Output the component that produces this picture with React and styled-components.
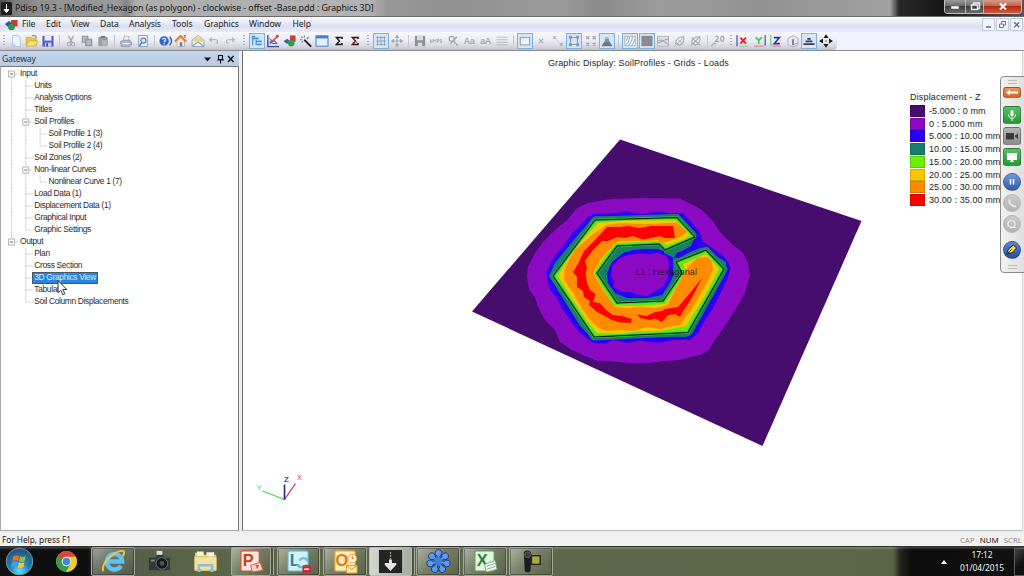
import React from "react";
import styled, { createGlobalStyle, css } from "styled-components";

const ui = `"Noto Sans", "Open Sans", sans-serif`;
const arial = `"Liberation Sans", Arial, sans-serif`;

const Global = createGlobalStyle`
  * { box-sizing: border-box; }
  body { margin: 0; overflow: hidden; background: #fff; }
`;

const Desktop = styled.div`
  position: relative;
  width: 1024px;
  height: 576px;
  display: flex;
  flex-direction: column;
  overflow: hidden;
  font-family: ${ui};
  color: #222;
  white-space: nowrap;
`;

/* ---------- title bar ---------- */
const TitleBar = styled.header`
  height: 17px;
  flex: none;
  display: flex;
  align-items: flex-start;
  padding: 0 2px 0 1px;
  border-bottom: 1px solid #686868;
  background:
    linear-gradient(90deg, rgba(0,0,0,.45) 0, rgba(60,60,60,.18) 15px, transparent 40px),
    linear-gradient(90deg, #8b8b8b 0, #9a9a9a 118px, #858585 126px, #adadad 136px, #b2b2b2 370px, #979797 388px, #919191 450px, #9a9a9a 560px, #8a8a8a 600px, #9c9c9c 660px, #929292 760px, #a0a0a0 890px, #2a2a2a 899px, #161616 945px, #555 1024px);
`;
const AppIcon = styled.svg`
  width: 11px;
  height: 13px;
  margin-top: 2px;
  flex: none;
`;
const Title = styled.h1`
  margin: 0 0 0 3px;
  flex: 1;
  font-size: 8.8px;
  line-height: 16px;
  font-weight: 400;
  letter-spacing: -0.06px;
  color: #161616;
`;
const WinButtons = styled.div`
  display: flex;
  height: 14px;
  border: 1px solid #bdbdbd;
  border-top: 0;
  border-radius: 0 0 4px 4px;
  overflow: hidden;
`;
const WinButton = styled.div`
  width: ${(p) => p.$w}px;
  display: flex;
  justify-content: center;
  border-right: 1px solid #b5b5b5;
  background: ${(p) =>
    p.$close
      ? "linear-gradient(#d49a8c 0, #c9614b 45%, #b02c12 50%, #cf5a3a 100%)"
      : "linear-gradient(#9b9b9b 0, #6b6b6b 45%, #3d3d3d 50%, #6a6a6a 100%)"};
  &:last-child { border-right: 0; }
`;

/* ---------- menu ---------- */
const MenuBar = styled.nav`
  height: 15px;
  flex: none;
  display: flex;
  align-items: center;
  padding: 0 1px 0 5px;
  background: linear-gradient(#fafbfe 0, #eef0fa 30%, #dcdff2 60%, #e6e9f7 100%);
`;
const MenuLogo = styled.svg`
  width: 13px;
  height: 12px;
  margin-right: 4px;
`;
const MenuItem = styled.span`
  width: ${(p) => p.$w}px;
  font-size: 8.6px;
  line-height: 15px;
  letter-spacing: -0.1px;
`;
const MdiButtons = styled.div`
  margin-left: auto;
  display: flex;
  gap: 1px;
`;
const MdiButton = styled.div`
  width: 13px;
  height: 13px;
  border: 1px solid #c3cbdd;
  background: #f1f4fb;
  display: flex;
`;

/* ---------- toolbar ---------- */
const ToolStrip = styled.div`
  height: 19px;
  flex: none;
  background: #f1f2fb;
  border-bottom: 1px solid #8c8c8c;
`;
const Tools = styled.div`
  width: 837px;
  height: 18px;
  display: flex;
  align-items: center;
  border-radius: 0 0 4px 0;
  background: linear-gradient(#f7f7fc 0, #ecedf5 45%, #d6d7e0 80%, #bfc0c8 100%);
`;
const ToolGroup = styled.div`
  width: ${(p) => p.$w}px;
  display: flex;
  justify-content: space-between;
`;
const Tool = styled.div`
  width: 16px;
  height: 16px;
  display: flex;
  align-items: center;
  justify-content: center;
  ${(p) =>
    p.$active &&
    css`
      background: #d3e6f8;
      border: 1px solid #7eb0dc;
    `}
  svg { width: 12px; height: 12px; flex: none; overflow: visible; }
`;
const Divider = styled.div`
  width: ${(p) => p.$w}px;
  height: 12px;
  display: flex;
  justify-content: center;
  &::after {
    content: "";
    width: ${(p) => (p.$grip ? 2 : 1)}px;
    background: ${(p) =>
      p.$grip ? "repeating-linear-gradient(#a9abb8 0 1.5px, transparent 1.5px 3px)" : "#c4c6d2"};
  }
`;

/* ---------- workspace ---------- */
const Workspace = styled.div`
  height: 482px;
  flex: none;
  display: flex;
  background: #eceef2;
`;
const Sidebar = styled.aside`
  width: 239px;
  height: 480px;
  display: flex;
  flex-direction: column;
`;
const PanelHead = styled.div`
  height: 15px;
  flex: none;
  display: flex;
  align-items: center;
  padding: 0 4px 0 2px;
  background: linear-gradient(#c3d5ea, #b7cce5);
  font-size: 8.6px;
  line-height: 14px;
  letter-spacing: -0.15px;
  color: #2a3442;
  svg { margin-left: auto; width: 32px; height: 10px; }
`;
const Tree = styled.ul`
  margin: 0;
  padding: 1px 0 0 7px;
  list-style: none;
  flex: 1;
  background: #fff;
  border: 1px solid #777;
  border-left-color: #aaa;
  border-bottom-color: #aaa;
`;
const TreeRow = styled.li`
  height: 12px;
  display: flex;
  align-items: center;
`;
const Guide = styled.svg`
  height: 12px;
  flex: none;
  width: ${(p) => p.$w}px;
`;
const TreeText = styled.span`
  font-family: ${arial};
  font-size: 8.4px;
  line-height: 11px;
  height: 12px;
  padding: 0 1px;
  margin-left: -1px;
  letter-spacing: -0.33px;
  color: #2c2c2c;
  ${(p) =>
    p.$on &&
    css`
      color: #d9ecff;
      background: #2c83da;
      outline: 1px solid #46566a;
      outline-offset: -1px;
      padding: 0 2px;
      margin-left: -2px;
    `}
`;
const View = styled.main`
  width: 781px;
  margin-left: 3px;
  height: 480px;
  display: flex;
  position: relative;
  background: #fff;
  border-left: 1px solid #6f6f6f;
  border-right: 1px solid #d2d5dd;
  border-bottom: 1px solid #bbb;
`;
const Scene = styled.svg`
  width: 779px;
  height: 479px;
  flex: none;
`;
const ViewTitle = styled.div`
  position: absolute;
  left: 305px;
  top: 7px;
  font: 9px/11px ${arial};
  letter-spacing: 0.12px;
  color: #1e1e1e;
`;
const Legend = styled.div`
  position: absolute;
  left: 667px;
  top: 40px;
  width: 90px;
  overflow: hidden;
  font: 9px/12px ${arial};
  letter-spacing: 0.17px;
  color: #222;
`;
const LegendRows = styled.div`
  padding-top: 1.5px;
`;
const LegendRow = styled.div`
  height: 12.75px;
  display: flex;
  align-items: center;
  letter-spacing: 0.08px;
  gap: 4px;
`;
const Swatch = styled.span`
  width: 15px;
  height: 12px;
  flex: none;
  background: ${(p) => p.$c};
  border: 1px solid rgba(0, 0, 0, 0.15);
`;

/* ---------- floating control strip ---------- */
const Strip = styled.div`
  position: absolute;
  left: 1000px;
  top: 76px;
  width: 26px;
  height: 197px;
  display: flex;
  flex-direction: column;
  align-items: center;
  padding: 10px 3px 0 0;
  background: linear-gradient(90deg, #f2f2f2, #dedede);
  border: 1px solid #8b8b8b;
  border-radius: 4px 0 0 4px;
  svg { display: block; flex: none; }
`;
const StripButton = styled.div`
  width: 18px;
  height: ${(p) => p.$h || 18}px;
  flex: none;
  margin-top: ${(p) => p.$mt || 0}px;
  border-radius: ${(p) => (p.$round ? "50%" : "3px")};
  border: 1px solid ${(p) => (p.$off ? "#b4b4b4" : "rgba(70, 70, 70, 0.45)")};
  background: linear-gradient(${(p) => p.$c});
  display: flex;
  align-items: center;
  justify-content: center;
`;
const StripGrip = styled.div`
  position: absolute;
  left: 7px;
  ${(p) => p.$edge}: 3px;
  width: 9px;
  height: 4px;
  border: 1px solid #bdbdbd;
  border-width: 1px 0;
`;

/* ---------- status + taskbar ---------- */
const StatusBar = styled.footer`
  height: 13px;
  flex: none;
  display: flex;
  align-items: center;
  padding: 0 2px 0 2px;
  background: #f1f1f0;
  font-size: 8.3px;
  letter-spacing: -0.03px;
  line-height: 12px;
`;
const StatusKeys = styled.div`
  margin-left: auto;
  display: flex;
  gap: 5px;
  letter-spacing: 0;
  font-size: 7.9px;
`;
const StatusKey = styled.span`
  color: ${(p) => (p.$on ? "#222" : "#8d8d8d")};
`;
const TaskBar = styled.div`
  height: 30px;
  flex: none;
  display: flex;
  align-items: flex-start;
  border-top: 1px solid #333;
  background:
    linear-gradient(rgba(255,255,255,.22) 0, rgba(255,255,255,0) 3px),
    linear-gradient(90deg, #111 0, #0e0e0e 88px, #454a3c 96px, #56604a 140px, #5b6647 230px, #5d674b 555px, #5b6648 893px, #24261f 900px, #0c0c0c 912px, #111 1024px);
`;
const Task = styled.div`
  width: ${(p) => p.$w}px;
  height: 29px;
  margin-left: ${(p) => p.$ml || 0}px;
  flex: none;
  display: flex;
  align-items: center;
  justify-content: center;
  svg { width: 25px; height: 25px; overflow: visible; }
  ${(p) =>
    p.$open &&
    css`
      border: 1px solid ${p.$bright ? "#b8bdb0" : "#a3a896"};
      border-radius: 2px;
      box-shadow: inset 0 0 0 1px rgba(20, 20, 20, 0.35);
      background: ${p.$bright
        ? "linear-gradient(90deg, #d5d7d0, #a6aba0)"
        : "linear-gradient(135deg, rgba(240,240,235,.55) 0, rgba(170,175,160,.35) 45%, rgba(80,85,70,.25) 100%)"};
    `}
  ${(p) => p.$stack && css`box-shadow: 3px 0 0 -1px #4b5241, 4px 0 0 -1px #a3a896;`}
`;
const Tray = styled.div`
  margin-left: auto;
  display: flex;
  align-items: center;
  height: 29px;
  color: #f2f2f2;
  svg { width: 6px; height: 4px; margin-right: 12px; margin-top: 1px; }
`;
const Clock = styled.div`
  width: 46px;
  text-align: center;
  font-size: 8.4px;
  line-height: 12.5px;
  letter-spacing: -0.05px;
`;
const ShowDesktop = styled.div`
  width: 10px;
  height: 28px;
  margin-left: 9px;
  border: 1px solid #5c5c5c;
  border-right: 0;
  background: linear-gradient(135deg, #444, #111 60%);
`;
const Pointer = styled.svg`
  position: absolute;
  left: 57px;
  top: 280px;
  width: 11px;
  height: 16px;
`;

/* ---------- toolbar glyphs ---------- */
const G = "#a6a8b0";
const S = ({ children }) => (
  <svg viewBox="0 0 14 14" fill="none" strokeWidth="1.2">{children}</svg>
);
const glyphs = {
  new: <><path d="M3 .5h6.500l2.500 2.500v10.500H3z" fill="#eef6ff" stroke="#a3bbdc" strokeWidth=".9" /><path d="M9.500 .5V3H12M3 9l6 4.500H3z" fill="#b8d4f4" /></>,
  open: <><path d="M0 2.500h6l1 1.500h5V12.500H0z" fill="#e8c53e" stroke="#b99a30" strokeWidth=".6" /><path d="M0 12.800 3.500 7H14l-3.500 5.800z" fill="#f8e36c" stroke="#b99a30" strokeWidth=".6" /><path d="M7 1.500c2-2 4.500-1 5 2" stroke="#5fb357" strokeWidth="1.600" /></>,
  save: <><path d="M.5 1h13v12.500H.5z" fill="#5a5fc0" /><path d="M3 1h8v5.500H3z" fill="#e9ecfa" /><path d="M3.500 9h7.500v4.500H3.500z" fill="#c9ccf0" /><path d="M5 9.500h2v4H5z" fill="#444a9e" /></>,
  cut: <><path d="M4 1l4.500 8M10 1 5.500 9" stroke={G} strokeWidth="1.600" /><circle cx="4.500" cy="10.800" r="2" stroke={G} /><circle cx="9.500" cy="10.800" r="2" stroke={G} /></>,
  copy: <><path d="M1.500 1.500h6.500v7H1.500z" fill="#b9bac1" stroke="#8f9098" /><path d="M5.500 5h7v7.500h-7z" fill="#a9aab2" stroke="#8b8c95" /><path d="M7 7.500h4M7 9.500h4" stroke="#dcdce2" strokeWidth=".8" /></>,
  paste: <><rect x="1.500" y="2" width="11" height="11" rx="1.500" fill="#9a9ba3" /><path d="M4.500 1h5v2.500h-5z" fill="#787983" /><path d="M5.500 6h6v6.500h-6z" fill="#b4b5bc" /></>,
  print: <><path d="M5 1l6 1-2 5H4z" fill="#eef2fb" stroke="#8c94ab" strokeWidth=".7" /><path d="M.5 7.500 4 6h7.500l2 2.500v3L10.500 13.500H1.500z" fill="#aeb5c9" stroke="#767f99" strokeWidth=".7" /><path d="M3 10h8" stroke="#f6f8ff" /></>,
  preview: <><path d="M2 .5h10v13H2z" fill="#f2f7ff" stroke="#8aa6cf" /><circle cx="7.500" cy="6.500" r="3" fill="#cfe5fb" stroke="#55789f" /><path d="M5.500 9 3 12.500" stroke="#55789f" strokeWidth="1.700" /></>,
  help: <><circle cx="6" cy="7" r="5.500" fill="#2c66c8" /><path d="M4.300 5.500c0-2.300 3.500-2.300 3.500 0C7.800 7 6 7 6 8.500M6 9.600V11" stroke="#fff" strokeWidth="1.400" /><path d="M12.500 2c2.500 3 2.500 7 0 10" stroke="#39589a" strokeWidth="1.500" /></>,
  home: <><path d="M0 7.500 6.500 1l6.500 6.500" stroke="#e07a26" strokeWidth="2.400" /><path d="M2.500 7.500 6.500 3.500 11 7.500V13.500H2.500z" fill="#f5efe4" stroke="#a9896b" strokeWidth=".6" /><path d="M5.500 8.500H8.500V13.500H5.500z" fill="#5b83be" /><path d="M10 .5h1.800v3" stroke="#b2452c" /></>,
  mail: <><path d="M0 6 7 .5 14 6v7.500H0z" fill="#e8edf0" stroke="#8696a5" strokeWidth=".9" /><path d="M1.500 5.500C5 2.500 9 2.500 12.500 5.500V7.500H1.500z" fill="#e9d96f" /><path d="M.5 13 7 8l6.500 5" stroke="#7f98b5" /></>,
  undo: <path d="M2 5.500h6.500c3.500 0 3.500 4 .5 4M4.500 3 2 5.500 4.500 8" stroke={G} strokeWidth="1.300" />,
  redo: <path d="M12 5.500H5.500c-3.500 0-3.500 4-.5 4M9.500 3 12 5.500 9.500 8" stroke={G} strokeWidth="1.300" />,
  tree: <><path d="M2 2.500v9.500M2 4h3M6 5v6h3M6 7.500h3" stroke="#2f7fc9" /><path d="M1 1h4v2H1zM5 3h4v2H5zM8.500 6.500h4v2h-4zM8.500 10h4v2h-4z" fill="#3c93dd" /></>,
  chart: <><path d="M1 0v13.500H14" stroke="#3c48a6" strokeWidth="1.600" /><path d="M3 10 12.500 1.500" stroke="#c93d3d" strokeWidth="1.500" /><path d="M3 4l3.500 4 2-1.500 3.500 4M3 7l3 3h5" stroke="#6a5fc6" /><circle cx="12" cy="1.500" r="1.700" fill="#c93d6d" /></>,
  shapes: <><path d="m-.5 7 4.500-2.500 3.500 3-4 3z" fill="#3a57bc" /><path d="M7 .5h6.500V8H7z" fill="#d03c34" /><circle cx="8.500" cy="9.500" r="3.800" fill="#2fa04b" /></>,
  wand: <><path d="m5 5.500 8 8" stroke="#222" strokeWidth="2.200" /><path d="M5 .5v2.500M1.500 2l1.500 1.500M0 5.500h2.500M8 4.500l2-2M2 9l1.500-1.500" stroke="#666" /></>,
  window: <><rect x="0" y="1" width="14" height="12" fill="#e4f0fb" stroke="#4b83c6" /><path d="M0 1h14v3H0z" fill="#3f7ecb" /></>,
  sum: <path d="M10.500 4.800V3H4L7.500 7 4 11H10.500V9.200" stroke="#16161a" strokeWidth="1.700" />,
  sumRed: <><path d="M10.500 4.800V3H4L7.500 7 4 11H10.500V9.200" stroke="#2a1416" strokeWidth="1.700" /><path d="M4 3 10.500 10.500M8 7l-4 4" stroke="#b52a2a" strokeWidth="1" /></>,
  grid: <path d="M1.500 3h11M1.500 7h11M1.500 11h11M3 1.500v11M7 1.500v11M11 1.500v11" stroke="#8d98a8" strokeWidth="1" />,
  pan: <><path d="M7 3v8M3 7h8" stroke={G} /><path d="M7 -.5 9.500 3.500h-5zM7 14.500 9.500 10.500h-5zM-.5 7 3.500 4.500v5zM14.500 7 10.500 4.500v5z" fill={G} /></>,
  disk: <><path d="M1 1h12v12H1z" fill="#8f9098" /><path d="M3.500 1h7v5h-7zM4.500 9h5v4h-5z" fill="#d9dae0" /></>,
  bmp: <path d="M.5 5v4h1.500M.5 7h2M2.500 5v4M4 9V5l1.500 2L7 5v4M8.500 9V5h2v2h-2M12 5v4h1.500V5z" stroke={G} strokeWidth=".9" />,
  tool: <><circle cx="5.500" cy="4.500" r="3" stroke={G} strokeWidth="1.500" /><path d="m7.500 6.500 5 6M11.500 2 4 10.500" stroke={G} strokeWidth="1.600" /></>,
  rows: <path d="M.5 2.500h13M.5 5.500h13M.5 8.500h13M.5 11.500h13" stroke="#b4b5bd" strokeWidth="1" />,
  rect: <rect x="1.500" y="3" width="11" height="8.500" fill="#e9f2fb" stroke="#8ea0b4" />,
  cross: <path d="m4.500 4.500 5 5M9.500 4.500l-5 5" stroke={G} />,
  seg: <><path d="m3 3 8 8" stroke="#c4c5cc" strokeWidth=".8" /><path d="m1.500 1.500 3 3M4.500 1.500l-3 3M9.500 9.500l3 3M12.500 9.500l-3 3" stroke={G} /></>,
  nodes: <><path d="M3 3h8v8H3z" stroke="#8e9bab" /><path d="M1 1h3.500v3.500H1zM9.500 1H13v3.500H9.500zM1 9.500h3.500V13H1zM9.500 9.500H13V13H9.500z" fill="#8e98a6" /></>,
  points: <path d="m1.500 1.500 3.500 3.500M5 1.500 1.500 5M9 1.500l3.500 3.500M12.500 1.500 9 5M1.500 9l3.500 3.500M5 9l-3.500 3.500M9 9l3.500 3.500M12.500 9l-3.500 3.500" stroke={G} strokeWidth="1.400" />,
  peak: <><path d="M.5 13 4 8h6l3.500 5z" fill="#6d747e" /><path d="M4 8.500 5.500 3a1.600 1.600 0 0 1 3 0l1.500 5.500z" fill="#868e99" /><circle cx="7" cy="3.500" r="1" fill="#d3e6f8" /></>,
  hatch: <><rect x="1" y="1.500" width="12" height="11" fill="#eef5fb" stroke="#9aa6b3" strokeWidth=".8" /><path d="M2 11c3-1 4-4 4.500-9M5 12c3-2 4-5 5-10M9 12c2-2 2.500-4 3.500-7M2 7c1.500-1 2-3 2-5" stroke="#8a96a5" strokeWidth=".9" /></>,
  solid: <rect x=".5" y="1" width="13" height="12" fill="#8a8b90" />,
  profile: <><rect x=".5" y="1.500" width="13" height="11.500" fill="#dcdde3" stroke={G} strokeWidth=".9" /><path d="M1 9c4 0 6-4 12-4M1 6h5l7 5" stroke={G} /></>,
  disc: <><path d="M2 10c0-5 3-8 9-8 2 5-1 9-5 10z" stroke={G} /><path d="m1 13 11-11M5 6c3 1 4 2 4 5M3 9l4 3" stroke={G} strokeWidth=".9" /></>,
  discX: <><path d="M2 9c0-4 3-7 9-7 2 5-1 9-5 10z" stroke={G} /><path d="m1 12 11-10M2 3l10 9" stroke={G} /></>,
  twenty: <><path d="M4 2.500c1-2 4-1 3 1.500L4 7.500H8.500" stroke={G} strokeWidth="1.400" /><ellipse cx="12" cy="4.500" rx="1.900" ry="3" stroke={G} strokeWidth="1.400" /><path d="m-1 13 3.500-3.500 2 1" stroke={G} /></>,
  x: <><path d="M0 0v13" stroke="#3a40b8" strokeWidth="1.300" /><path d="m4 3 6.500 7M10.500 3l-6.500 7" stroke="#d0262e" strokeWidth="2.200" /><path d="M3 13h10" stroke="#60d765" strokeWidth=".9" /></>,
  y: <><path d="m2 2.500 3.500 4L9 2.500M5.500 6.500v4" stroke="#35cf4b" strokeWidth="1.900" /><path d="M13 0v12.500" stroke="#3a40b8" strokeWidth="1.300" /><path d="M0 13h11" stroke="#e0656a" strokeWidth=".9" /></>,
  z: <><path d="M1 0v12.500" stroke="#54cf5c" strokeWidth="1.200" /><path d="M4.500 3H11L5 10h6.500" stroke="#2c30ae" strokeWidth="1.900" /><path d="M2 13h11" stroke="#e0656a" strokeWidth=".9" /></>,
  cube: <><path d="m1 4 6-3.500L13 4v7l-6 3-6-3z" fill="#e6e6ee" stroke="#a9a9b5" strokeWidth="1" /><path d="M7 5v7" stroke="#5c44b4" strokeWidth="1.600" /><path d="m7 11.500 5-2" stroke="#d77" strokeWidth="1" /></>,
  stack: <path d="M5 4.500h4M3 7.500h8M.5 10.700h13" stroke="#3c4046" strokeWidth="2" />,
  move: <path d="M7 -1 10 3.500H4zM7 15 10 10.500H4zM-1 7 3.500 4v6zM15 7 10.500 4v6zM6.300 6.300h1.400v1.400H6.300z" fill="#1c1c1f" />,
};
const TextGlyph = styled.span`
  font: 600 9px/14px ${arial};
  letter-spacing: -0.4px;
  color: #a6a8b0;
`;
const groups = [
  { gap: 8, grip: true, w: 48, items: ["new", "open", "save"] },
  { gap: 7, w: 48, items: ["cut", "copy", "paste"] },
  { gap: 7, w: 33, items: ["print", "preview"] },
  { gap: 6, w: 81, items: ["help", "home", "mail", "undo", "redo"] },
  { gap: 11, grip: true, w: 114, items: ["*tree", "chart", "shapes", "wand", "window", "sum", "sumRed"] },
  { gap: 10, grip: true, w: 32, items: ["*grid", "pan"] },
  { gap: 7, w: 98, items: ["disk", "bmp", "tool", "Aa", "aA", "rows"] },
  { gap: 7, w: 98, items: ["*rect", "cross", "seg", "*nodes", "points", "*peak"] },
  { gap: 7, w: 82, items: ["*hatch", "*solid", "profile", "disc", "discX"] },
  { gap: 6, w: 16, items: ["twenty"] },
  { gap: 9, grip: true, w: 99, items: ["x", "y", "z", "cube", "*stack", "move"] },
];

const menu = [
  ["File", 24], ["Edit", 25], ["View", 29], ["Data", 29], ["Analysis", 43],
  ["Tools", 32], ["Graphics", 45], ["Window", 43.5], ["Help", 30],
];

/* [label, depth, expandable, last sibling, tag] */
const tree = [
  ["Input", 0, true, false, "first"],
  ["Units", 1], ["Analysis Options", 1], ["Titles", 1],
  ["Soil Profiles", 1, true],
  ["Soil Profile 1 (3)", 2], ["Soil Profile 2 (4)", 2, false, true],
  ["Soil Zones (2)", 1],
  ["Non-linear Curves", 1, true],
  ["Nonlinear Curve 1 (7)", 2, false, true],
  ["Load Data (1)", 1], ["Displacement Data (1)", 1], ["Graphical Input", 1],
  ["Graphic Settings", 1, false, true],
  ["Output", 0, true, true],
  ["Plan", 1, false, false, "out"], ["Cross Section", 1, false, false, "out"],
  ["3D Graphics View", 1, false, false, "out"], ["Tabular", 1, false, false, "out"],
  ["Soil Column Displacements", 1, false, true, "out"],
];

function TreeGuide({ depth, box, last, tag }) {
  const w = 12 + depth * 14.3;
  const cx = 3.5 + depth * 14.3;
  const lines = [];
  for (let d = 0; d < depth; d++) {
    if (d === 0 && tag === "out") continue;
    lines.push(<path key={d} d={`M${3.5 + d * 14.3} 0V12`} />);
  }
  return (
    <Guide $w={w} viewBox={`0 0 ${w} 12`}>
      <g stroke="#b2b2b2" strokeWidth=".8" strokeDasharray="1 .6">
        {lines}
        {tag !== "first" && <path d={`M${cx} 0V6`} />}
        {!last && <path d={`M${cx} 6V12`} />}
        <path d={`M${cx} 6h7`} />
      </g>
      {box && (
        <>
          <rect x={cx - 3} y="3" width="6" height="6" fill="#fff" stroke="#a5a5a5" strokeWidth=".8" />
          <path d={`M${cx - 1.5} 6h3`} stroke="#555" strokeWidth=".9" />
        </>
      )}
    </Guide>
  );
}

const legend = [
  ["#460c6e", "-5.000 : 0 mm"], ["#8c0ac3", "0 : 5.000 mm"], ["#2a00f5", "5.000 : 10.00 mm"],
  ["#14806a", "10.00 : 15.00 mm"], ["#6af000", "15.00 : 20.00 mm"], ["#fac800", "20.00 : 25.00 mm"],
  ["#ff8c00", "25.00 : 30.00 mm"], ["#ff0000", "30.00 : 35.00 mm"],
];

const loadOutline =
  "M595 220 677 217.500 695 237 665 250 659 244 617 246 597 273 617 303 663 301 682 273 676 262 706 250 724 269 688 332.500 594 337 553 276Z";

function Contours() {
  return (
    <Scene viewBox="243 51 779 479">
      <path fill="#460c6e" d="M620 139.500 861.500 221 762.500 446 472 311.500Z" />
      <path fill="#8c0ac3" strokeLinejoin="round" d="M680 198.500 640 198 610 199 588 203 577 208 567 220 555 230 543 242 535 253 528 267 527 277 529 290 535 297 538 307 545 320 555 330 560 342 572 350 583 355 597 361 620 362 632 363.500 647 363 665 361 680 360 690 357 700 355 708 351 715 340 727 323 737 307 745 293 750 275 748 263 743 253 733 245 720 232 712 220 702 210 687 202Z" />
      <path fill="#2a00f5" d="M593 214 610 213.500 627 211.500 640 214 660 211.500 670 213.500 683 213 692 223 700 233 703 242 712 248 722 255 728 262 730.500 268 728 277 723 288 712 310 705 320 698 333 690 340 673 340 657 343 640 340.500 627 343 613 340 606 343.500 593 343 580 333 570 320 563 310 557 298 550 290 546 273 552 260 560 250 573 233 587 218Z" />
      <path fill="none" stroke="#14806a" strokeWidth="7" strokeLinejoin="round" d={loadOutline} />
      <path fill="#14806a" d="M595 216.500 620 217 640 216 678 214.500 686 224 688 230 680 234 726 262 726 273 692 334 686 337 640 335.500 594 340 580 326 549 276 555 263 577 236Z" />
      <path fill="#2a00f5" d="M607 273 612 262 623 253 633 250 643 249 657 249 668 252 680 252 691 246 696 234 703 242 708 246 700 248 688 253 679 258 673 258 673 270 674 274 670 283 662 295 647 298 627 298 615 293 608 283Z" />
      <path fill="#14806a" d="M664 250 684 242 691 241 686 248 677 253 674 258 670 256 664 253Z" />
      <path fill="#8c0ac3" d="M620 258 628 255 640 253.500 650 254.500 657 252.500 667 256 669 262 668 277 663 287 655 291 647 296 637 294.500 630 292 623 292 613 287 614 282 611 276 612 267Z" />
      <path fill="#5fe81c" stroke="#3cc038" strokeWidth="2.600" strokeLinejoin="round" d={loadOutline} />
      <path fill="#fac800" d="M598 223 610 222 625 220.500 676 220.500 690 235 684 239 667 245 658 241 616 243 605 256 594 273 602 287 614 305.500 640 306 665 304 675 289 686 271 683 264 706 254 719 269 703 299 686 326 660 331 640 331 620 333.500 597 333 588 322 573 300 558 276 566 262 580 243Z" />
      <path fill="#ff8c00" d="M606 225 620 223 645 224 677 222.500 687 232 680 237 672 240 663 243 657 240 635 241 617 241.500 607 252 601 259 593 273 603 290 615 307 628 308 640 307 655 308 667 305.500 677 287 687 268 697 258 707 257 712 262 713 270 703 290 691 310 680 325 668 327 660 329 647 327 634 331 620 330 607 331 599 328 590 320 580 305 573 293 564 280 565 267 575 250 592 235Z" />
      <path fill="#f00" d="M607 227 620 227 628 226 640 228 650 226 673 226 675 238 665 238 660 236 643 239.500 633 236 625 238 617 237 608 241 602 241 593 250 585 261 587 268 585.500 273 587 283 590 290 595.500 294 593 302 600 303 606 310 613 315 622 316 632 319 631 323 620 322.500 612 320 603 315 597 312 589 305 590 301 584 297 583 291 577 287 577 277 573 272 578 264 584 251 595 240Z" />
      <path fill="#f00" d="M637 314.500 647 316 655 312 662 311 665 309 678 307 690 293 702 278 697 288 690 301 683 311 680 317 675 314 668 315 662 322 655 318.500 650 320 640 318Z" />
      <path fill="none" stroke="#0c140c" strokeWidth="1.100" d={loadOutline} />
      <g fontFamily={arial} fontSize="9">
        <text x="635.500" y="274.500" fill="#22102c" fillOpacity=".65" textLength="15">L1 :</text>
        <text x="653" y="274.500" fill="#221018" fillOpacity=".85" textLength="44">Hexagonal</text>
        <g strokeWidth="1.300">
          <path d="M284.500 499.500 262.500 491" stroke="#3ade58" />
          <path d="M284.500 499.500 295.500 483.500" stroke="#c93b45" />
          <path d="M284.500 499.500V484.500" stroke="#2420a8" strokeWidth="1.600" />
        </g>
        <text x="256.500" y="490" fontSize="8" fill="#3ade58">Y</text>
        <text x="284" y="481.500" fontSize="8" fill="#2a28b0" stroke="#2a28b0" strokeWidth=".2">Z</text>
        <text x="297" y="480" fontSize="7.500" fill="#c93b45">X</text>
      </g>
    </Scene>
  );
}

const bold = { fontFamily: arial, fontWeight: 700 };
const I = ({ children }) => <svg viewBox="0 0 26 26">{children}</svg>;

export default function App() {
  return (
    <Desktop>
      <Global />
      <TitleBar>
        <AppIcon viewBox="0 0 11 13"><rect width="11" height="13" rx="1.500" fill="#1d1d1d" /><path d="M5.500 2v5M3 7.500h5l-2.500 3z" stroke="#fff" fill="#fff" strokeWidth="1" /></AppIcon>
        <Title>Pdisp 19.3 - [Modified_Hexagon (as polygon) - clockwise - offset -Base.pdd : Graphics 3D]</Title>
        <WinButtons>
          <WinButton $w={21}><svg width="12" height="13"><rect x="2" y="6" width="8" height="3" fill="#fff" stroke="#555" strokeWidth=".5" /></svg></WinButton>
          <WinButton $w={18}><svg width="12" height="13"><path d="M4.500 4.500V3h6v5.500H9M2.500 5h6v4.500h-6z" fill="none" stroke="#eee" strokeWidth="1.400" /></svg></WinButton>
          <WinButton $w={37} $close><svg width="12" height="13"><path d="m3 3.500 6 6M9 3.500l-6 6" stroke="#fff" strokeWidth="2" /></svg></WinButton>
        </WinButtons>
      </TitleBar>
      <MenuBar>
        <MenuLogo viewBox="0 0 13 12"><path d="m0 5 4-3 4 3-4 4z" fill="#3150b5" /><path d="M6 1h6.500v6.500H6z" fill="#cf3a33" /><circle cx="6.500" cy="8" r="3.300" fill="#2c9a48" /></MenuLogo>
        {menu.map(([t, w]) => <MenuItem key={t} $w={w}>{t}</MenuItem>)}
        <MdiButtons>
          <MdiButton><svg width="11" height="11"><path d="M3 8h5" stroke="#5d6b85" strokeWidth="1.500" /></svg></MdiButton>
          <MdiButton><svg width="11" height="11"><path d="M4.500 4.500V2.500h4v3.500H7M2.500 5h4v3.500h-4z" fill="none" stroke="#6b7890" /></svg></MdiButton>
          <MdiButton><svg width="11" height="11"><path d="m3.200 3.200 5 5M8.200 3.200l-5 5" stroke="#5d6b85" strokeWidth="1.300" /></svg></MdiButton>
        </MdiButtons>
      </MenuBar>
      <ToolStrip>
        <Tools>
          {groups.map((g, i) => (
            <React.Fragment key={i}>
              <Divider $w={g.gap} $grip={g.grip} />
              <ToolGroup $w={g.w}>
                {g.items.map((n) => {
                  const key = n.replace("*", "");
                  return (
                    <Tool key={n} $active={n !== key}>
                      {glyphs[key] ? <S>{glyphs[key]}</S> : <TextGlyph>{key}</TextGlyph>}
                    </Tool>
                  );
                })}
              </ToolGroup>
            </React.Fragment>
          ))}
        </Tools>
      </ToolStrip>
      <Workspace>
        <Sidebar>
          <PanelHead>
            Gateway
            <svg viewBox="0 0 32 10"><path d="M1 3.500h7L4.500 7.500z" fill="#111" /><path d="M15.500 1.500h4v4h-4zM14 6h7M17.500 6v3.500" stroke="#111" fill="none" strokeWidth="1.100" /><path d="m25 2 5.500 6M30.500 2 25 8" stroke="#111" strokeWidth="1.500" /></svg>
          </PanelHead>
          <Tree>
            {tree.map(([t, d, box, last, tag]) => (
              <TreeRow key={t}>
                <TreeGuide depth={d} box={box} last={last} tag={tag} />
                <TreeText $on={t === "3D Graphics View"}>{t}</TreeText>
              </TreeRow>
            ))}
          </Tree>
        </Sidebar>
        <View>
          <Contours />
          <ViewTitle>Graphic Display: SoilProfiles - Grids - Loads</ViewTitle>
          <Legend>
            Displacement - Z
            <LegendRows>
              {legend.map(([c, t]) => <LegendRow key={t}><Swatch $c={c} />{t}</LegendRow>)}
            </LegendRows>
          </Legend>
        </View>
      </Workspace>
      <StatusBar>
        For Help, press F1
        <StatusKeys><StatusKey>CAP</StatusKey><StatusKey $on>NUM</StatusKey><StatusKey>SCRL</StatusKey></StatusKeys>
      </StatusBar>
      <TaskBar>
        <Task $w={38}><I>
          <defs><radialGradient id="orb" cx=".5" cy=".85" r=".9"><stop offset="0" stopColor="#5fe0f5" /><stop offset=".4" stopColor="#2a7fb5" /><stop offset="1" stopColor="#23486e" /></radialGradient></defs>
          <circle cx="13" cy="13" r="13.800" fill="url(#orb)" stroke="#7fb3cc" strokeWidth=".8" />
          <path d="M6.500 7.500c2.500-1.500 4-1.300 6-.3l-1 5.300c-2-1-4-1-6 .2z" fill="#f06a2c" /><path d="M13.500 7.600c2 .9 4 1 6-.3l-1.200 5.200c-2 1.300-4 1.200-5.800.2z" fill="#8cc63e" />
          <path d="M5.200 13.700c2-1.200 4-1.200 6-.2l-1 5c-2-1-4-1-6 .3z" fill="#35a5e6" /><path d="M12.200 13.900c2 .9 4 .9 6-.3l-1.200 5.200c-2 1.200-4 1.100-5.800.1z" fill="#fdc832" />
        </I></Task>
        <Task $w={46} $ml={5}><I>
          <circle cx="13" cy="13" r="10.800" fill="#e8c62c" /><path d="M13 13 3.700 7.600a10.800 10.800 0 0 1 18.700 0z" fill="#db4437" /><path d="M3.700 7.600a10.800 10.800 0 0 0 9 16.200l4.700-8.300L13 13z" fill="#2f9e4f" /><path d="M13 8h9.600A10.800 10.800 0 0 1 12.500 23.800l5-8.500z" fill="#f3cb2f" /><circle cx="13" cy="13" r="5" fill="#f4f4f4" /><circle cx="13" cy="13" r="3.900" fill="#4a86d8" />
        </I></Task>
        <Task $w={44} $ml={2} $open><I>
          <path d="M20.800 17.500a8 8 0 1 1 1.200-4.500H7" fill="none" stroke="#5ec4f4" strokeWidth="4.600" /><path d="M2.500 23C-1 16 14 1 23 2c2 .5 1 3.500-.5 5.500" fill="none" stroke="#f0c53c" strokeWidth="2" />
        </I></Task>
        <Task $w={46} $ml={1}><I>
          <path d="M2 9h7l1.500-3h6L18 9h6v13H2z" fill="#35383a" /><path d="M10 2h6v4h-6z" fill="#d7dde2" /><circle cx="15.500" cy="15" r="6" fill="#17191b" stroke="#6f7375" /><circle cx="15.500" cy="15" r="2.500" fill="#4e5458" /><path d="M4 11h4v2H4z" fill="#83888b" />
        </I></Task>
        <Task $w={46}><I>
          <path d="M2 4h8l2 2h12v17H2z" fill="#e5cd78" /><path d="M4 2.500h7v5H4zM14 3.500h8v5h-8z" fill="#f7f3dc" /><path d="M1.500 8h23v14h-23z" fill="#f4e19a" stroke="#cbb25c" strokeWidth=".6" /><path d="M6 24v-7h14v7M4.500 22h4M17.500 22h4" fill="none" stroke="#86bfe0" strokeWidth="2.600" />
        </I></Task>
        <Task $w={40} $ml={3} $open $stack><I>
          <rect x="2" y="2" width="19" height="21" rx="1.500" fill="#fbe9e2" stroke="#d35230" strokeWidth="1.200" /><text x="4" y="18" fontSize="17" fill="#c9401c" {...bold}>P</text><path d="m12 17 10-3 3 8-11 2z" fill="#f6d5ca" stroke="#d35230" strokeWidth=".9" /><path d="m17 16 4 1-2 4z" fill="#d35230" />
        </I></Task>
        <Task $w={43} $ml={6} $open><I>
          <rect x="2" y="2" width="21" height="21" rx="1.500" fill="#d9f0f8" stroke="#5bb1d0" strokeWidth="1.200" /><text x="4" y="18" fontSize="17" fill="#2585a9" {...bold}>L</text><path d="M14 12c3-4 8-3 8 1M22 16c-3 4-9 4-10 0" fill="none" stroke="#6fbedb" strokeWidth="2.500" /><rect x="17" y="17" width="9" height="8" rx="1.500" fill="#c62a34" /><path d="M19 21h5" stroke="#fff" strokeWidth="1.600" />
        </I></Task>
        <Task $w={44} $ml={3} $open><I>
          <rect x="2" y="2" width="21" height="21" rx="1.500" fill="#fdeebf" stroke="#e6a532" strokeWidth="1.200" /><text x="2.500" y="18" fontSize="17" fill="#dd7a10" {...bold}>O</text><circle cx="20" cy="10" r="4.500" fill="#fff7dd" stroke="#e6a532" /><path d="M20 7v3h2" stroke="#b8761a" fill="none" /><path d="M14 17h11v8H14z" fill="#fbe8a8" stroke="#dc9a28" /><path d="m14 17 5.500 4.500L25 17" fill="none" stroke="#dc9a28" />
        </I></Task>
        <Task $w={43} $ml={2} $open $bright $stack><I>
          <rect x="1" y="1" width="24" height="24" fill="#242424" /><path d="M13 3v10" stroke="#9b9b9b" strokeWidth="1.300" strokeDasharray="2 1" /><path d="M11.500 11h3v3.500H19v2L13 23l-6-6.500v-2h4.500z" fill="#e4e4e4" />
        </I></Task>
        <Task $w={44} $ml={4} $open><I>
          <g stroke="#17336f" strokeWidth=".9" fill="#5b9bf2">
            {[0, 51.4, 102.9, 154.3, 205.7, 257.1, 308.6].map((a) => <path key={a} transform={`rotate(${a} 13 13)`} d="M11.500 11.500V7.300a3.500 3.500 0 1 1 3 0V11.500z" />)}
            <circle cx="13" cy="13" r="4.300" fill="#3d7fe0" stroke="none" />
          </g>
        </I></Task>
        <Task $w={44} $ml={3} $open><I>
          <rect x="2" y="2" width="20" height="21" rx="1.500" fill="#e6f4e1" stroke="#55a05a" strokeWidth="1.200" /><text x="4" y="18" fontSize="17" fill="#2a8238" {...bold}>X</text><path d="m12 16 11-4 2 9-11 3z" fill="#f4faf0" stroke="#6aaa6a" strokeWidth=".9" /><path d="m14 18 9-3M14.500 21l9-3" stroke="#7ab67a" />
        </I></Task>
        <Task $w={44} $ml={2} $open><I>
          <path d="M5 3c4-3 8-1 8 3l-1 16c0 3-6 3-6 0z" fill="#1b1c1d" /><circle cx="9" cy="6" r="3" fill="#3a3d40" stroke="#74787a" strokeWidth=".8" /><rect x="13" y="7" width="9" height="9" fill="#a9ad3c" stroke="#2a2c2a" strokeWidth="1.500" />
        </I></Task>
        <Tray>
          <svg viewBox="0 0 6 4"><path d="M0 4 3 0l3 4z" fill="#fff" /></svg>
          <Clock>17:12<br />01/04/2015</Clock>
          <ShowDesktop />
        </Tray>
      </TaskBar>
      <Strip>
        <StripGrip $edge="top" />
        <StripButton $h={11} $c="#f0925c, #d9621f"><svg width="14" height="7"><path d="M1 3.500 5 .5v2h8v2H5v2z" fill="#fff" /></svg></StripButton>
        <StripButton $mt={8} $c="#58c063, #249a35"><svg width="10" height="13"><rect x="3.500" y="1" width="3" height="6.500" rx="1.500" fill="#fff" /><path d="M1.500 5.500c0 5 7 5 7 0M5 9v3" fill="none" stroke="#fff" /></svg></StripButton>
        <StripButton $mt={3} $c="#b4b4b4, #8d8d8d"><svg width="14" height="9"><path d="M1 1h8v6.500H1zM9.500 4 13 1.500v5.500z" fill="#3a3a3a" /></svg></StripButton>
        <StripButton $mt={3} $c="#58c063, #249a35"><svg width="12" height="11"><path d="M1 1h10v7H7l1 2H4l1-2H1z" fill="#fff" /></svg></StripButton>
        <StripButton $mt={7} $round $c="#6f97dc, #2f5cae"><svg width="8" height="8"><path d="M2.500 1v5.500M5.500 1v5.500" stroke="#fff" strokeWidth="1.500" /></svg></StripButton>
        <StripButton $mt={3} $round $off $c="#cbcbcb, #b4b4b4"><svg width="10" height="10"><path d="M2 1.500c0 4 3 7 7 7" stroke="#e6e6e6" strokeWidth="2" fill="none" /></svg></StripButton>
        <StripButton $mt={3} $round $off $c="#cbcbcb, #b4b4b4"><svg width="11" height="11"><circle cx="5.500" cy="5" r="3.500" stroke="#e6e6e6" strokeWidth="1.500" fill="none" /><path d="M5 8.500h5" stroke="#eee" /></svg></StripButton>
        <StripButton $mt={8} $round $c="#5d86d2, #254e9e"><svg width="13" height="13"><path d="m1.500 10 2-5 5-4 3 3-4 4.500z" fill="#f2e23a" stroke="#222" /><path d="m3 9 4-4" stroke="#222" /></svg></StripButton>
        <StripGrip $edge="bottom" />
      </Strip>
      <Pointer viewBox="0 0 11 16"><path d="M1 .5v12.300l2.800-2.600 2 4.600 2.100-1-2-4.300h3.900z" fill="#fff" stroke="#333" /></Pointer>
    </Desktop>
  );
}
